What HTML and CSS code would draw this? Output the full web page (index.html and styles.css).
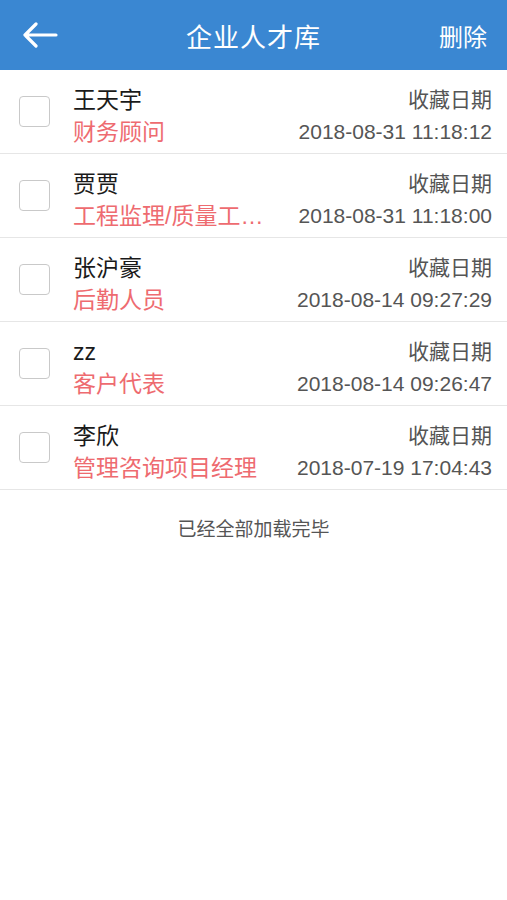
FILE: index.html
```html
<!DOCTYPE html>
<html lang="zh">
<head>
<meta charset="utf-8">
<title>企业人才库</title>
<link rel="stylesheet" href="styles.css">
</head>
<body>
<header class="bar">
  <div class="bar-left">
    <svg class="back" width="36" height="26" viewBox="0 0 36 26" aria-hidden="true">
      <path d="M3 13 H34 M14 2 L3 13 L14 24" fill="none" stroke="#fff" stroke-width="3.2" stroke-linecap="round" stroke-linejoin="round"/>
    </svg>
  </div>
  <h1 class="title">企业人才库</h1>
  <div class="bar-right">删除</div>
</header>
<ul class="list">
  <li class="row">
    <span class="check"></span>
    <div class="info"><div class="name">王天宇</div><div class="job">财务顾问</div></div>
    <div class="meta"><div class="label">收藏日期</div><div class="date">2018-08-31 11:18:12</div></div>
  </li>
  <li class="row">
    <span class="check"></span>
    <div class="info"><div class="name">贾贾</div><div class="job">工程监理/质量工程师</div></div>
    <div class="meta"><div class="label">收藏日期</div><div class="date">2018-08-31 11:18:00</div></div>
  </li>
  <li class="row">
    <span class="check"></span>
    <div class="info"><div class="name">张沪豪</div><div class="job">后勤人员</div></div>
    <div class="meta"><div class="label">收藏日期</div><div class="date">2018-08-14 09:27:29</div></div>
  </li>
  <li class="row">
    <span class="check"></span>
    <div class="info"><div class="name">zz</div><div class="job">客户代表</div></div>
    <div class="meta"><div class="label">收藏日期</div><div class="date">2018-08-14 09:26:47</div></div>
  </li>
  <li class="row">
    <span class="check"></span>
    <div class="info"><div class="name">李欣</div><div class="job">管理咨询项目经理</div></div>
    <div class="meta"><div class="label">收藏日期</div><div class="date">2018-07-19 17:04:43</div></div>
  </li>
</ul>
<p class="end">已经全部加载完毕</p>
</body>
</html>
```
FILE: styles.css
```css
* { box-sizing: border-box; }
html, body { margin: 0; padding: 0; background: #fff; }
body {
  font-family: "Liberation Sans", "Noto Sans CJK SC", sans-serif;
  color: #1a1a1a;
}
.bar {
  height: 70px;
  background: #3a87d2;
  display: grid;
  grid-template-columns: 1fr auto 1fr;
  align-items: center;
  color: #fff;
}
.bar-left { padding-left: 22px; display: flex; align-items: center; }
.back { display: block; }
.title {
  margin: 0;
  font-size: 26px;
  font-weight: normal;
  letter-spacing: 1px;
}
.bar-right {
  justify-self: end;
  padding-right: 20px;
  font-size: 24px;
}
.list { list-style: none; margin: 0; padding: 0; }
.row {
  height: 84px;
  border-bottom: 1px solid #e6e6e6;
  display: flex;
  align-items: flex-start;
  padding: 14px 15px 0 19px;
  gap: 20px;
}
.check {
  flex: none;
  width: 31px;
  height: 31px;
  border: 1.5px solid #c9c9c9;
  border-radius: 4px;
  align-self: center;
  margin-top: -14px;
  margin-right: 3px;
}
.info { flex: 1; min-width: 0; }
.name, .job, .label, .date {
  line-height: 32px;
  height: 32px;
  white-space: nowrap;
}
.name { font-size: 23px; color: #1a1a1a; }
.job {
  font-size: 23px;
  color: #ee6b70;
  overflow: hidden;
  text-overflow: ellipsis;
}
.meta { flex: none; text-align: right; color: #555; }
.label { font-size: 21px; }
.date { font-size: 21px; }
.end {
  margin: 24px 0 0;
  text-align: center;
  font-size: 19px;
  color: #555;
}
```
